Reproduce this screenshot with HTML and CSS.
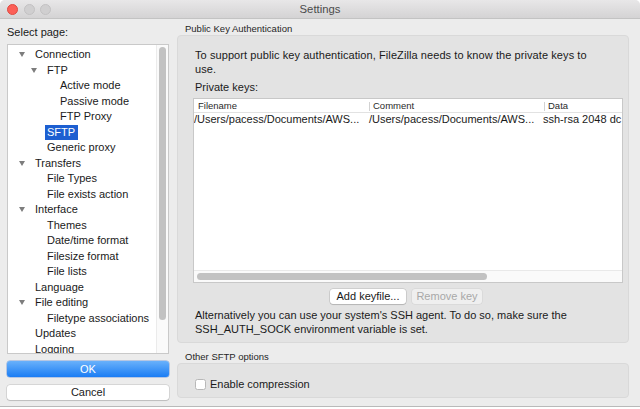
FILE: index.html
```html
<!DOCTYPE html>
<html>
<head>
<meta charset="utf-8">
<link rel="stylesheet" href="styles.css">
</head>
<body>
<div class="window">
  <div class="titlebar">
    <div class="lights">
      <span class="light red"></span>
      <span class="light gray"></span>
      <span class="light gray"></span>
    </div>
    <div class="title">Settings</div>
    <div></div>
  </div>
  <div class="content">
    <div class="left">
      <div class="select-label">Select page:</div>
      <div class="tree">
        <div class="tree-list">
          <div class="item l0"><span class="tw"><span class="tri"></span></span>Connection</div>
          <div class="item l1"><span class="tw"><span class="tri"></span></span>FTP</div>
          <div class="item l2"><span class="tw"></span>Active mode</div>
          <div class="item l2"><span class="tw"></span>Passive mode</div>
          <div class="item l2"><span class="tw"></span>FTP Proxy</div>
          <div class="item l1"><span class="tw"></span><span class="sel">SFTP</span></div>
          <div class="item l1"><span class="tw"></span>Generic proxy</div>
          <div class="item l0"><span class="tw"><span class="tri"></span></span>Transfers</div>
          <div class="item l1"><span class="tw"></span>File Types</div>
          <div class="item l1"><span class="tw"></span>File exists action</div>
          <div class="item l0"><span class="tw"><span class="tri"></span></span>Interface</div>
          <div class="item l1"><span class="tw"></span>Themes</div>
          <div class="item l1"><span class="tw"></span>Date/time format</div>
          <div class="item l1"><span class="tw"></span>Filesize format</div>
          <div class="item l1"><span class="tw"></span>File lists</div>
          <div class="item l0"><span class="tw"></span>Language</div>
          <div class="item l0"><span class="tw"><span class="tri"></span></span>File editing</div>
          <div class="item l1"><span class="tw"></span>Filetype associations</div>
          <div class="item l0"><span class="tw"></span>Updates</div>
          <div class="item l0"><span class="tw"></span>Logging</div>
        </div>
        <div class="vscroll"><div class="vthumb"></div></div>
      </div>
      <div class="btn ok">OK</div>
      <div class="btn cancel">Cancel</div>
    </div>
    <div class="right">
      <div class="group-label">Public Key Authentication</div>
      <div class="group box1">
        <p class="text intro">To support public key authentication, FileZilla needs to know the private keys to use.</p>
        <p class="text keys-label">Private keys:</p>
        <div class="table">
          <div class="thead">
            <div class="th c1">Filename</div>
            <div class="th c2">Comment</div>
            <div class="th c3">Data</div>
          </div>
          <div class="tbody">
            <div class="tr">
              <div class="td c1">/Users/pacess/Documents/AWS...</div>
              <div class="td c2">/Users/pacess/Documents/AWS...</div>
              <div class="td c3">ssh-rsa 2048 dc</div>
            </div>
          </div>
          <div class="hscroll"><div class="hthumb"></div></div>
        </div>
        <div class="btn-row">
          <div class="btn add">Add keyfile...</div>
          <div class="btn remove">Remove key</div>
        </div>
        <p class="text alt">Alternatively you can use your system's SSH agent. To do so, make sure the SSH_AUTH_SOCK environment variable is set.</p>
      </div>
      <div class="group-label second">Other SFTP options</div>
      <div class="group box2">
        <div class="check-row">
          <span class="checkbox"></span>
          <span class="check-text">Enable compression</span>
        </div>
      </div>
    </div>
  </div>
</div>
</body>
</html>
```
FILE: styles.css
```css
* { box-sizing: border-box; }
html, body { margin: 0; padding: 0; }
body {
  width: 640px;
  height: 409px;
  background: #ffffff;
  font-family: "Liberation Sans", Arial, sans-serif;
  font-size: 11px;
  color: #1a1a1a;
  overflow: hidden;
}
.window {
  width: 640px;
  height: 407px;
  background: #ececec;
  border-radius: 5px 5px 0 0;
  border-bottom: 1px solid #b9b9b9;
  overflow: hidden;
}
.titlebar {
  height: 19px;
  background: linear-gradient(#e8e7e8, #d4d3d4);
  border-bottom: 1px solid #c3c3c3;
  display: grid;
  grid-template-columns: 1fr auto 1fr;
  align-items: center;
}
.lights {
  display: flex;
  gap: 5.5px;
  padding-left: 7px;
  padding-top: 1px;
}
.light {
  width: 11px;
  height: 11px;
  border-radius: 50%;
  display: block;
}
.light.red { background: #fc5f57; border: 0.5px solid #de4a41; }
.light.gray { background: #d0cfd0; border: 0.5px solid #c2c1c2; }
.title {
  font-size: 11.3px;
  line-height: 18px;
  color: #4b4b4b;
}
.content {
  display: flex;
  height: 387px;
}
.left {
  width: 162px;
  margin-left: 7px;
  padding-top: 6px;
  display: flex;
  flex-direction: column;
}
.select-label {
  line-height: 15px;
  height: 15px;
}
.tree {
  margin-top: 4px;
  height: 310px;
  background: #ffffff;
  border: 1px solid #c9c9c9;
  display: flex;
}
.tree-list {
  flex: 1;
  overflow: hidden;
  padding-top: 2px;
}
.item {
  height: 15.5px;
  line-height: 15.5px;
  white-space: nowrap;
  color: #1a1a1a;
}
.item.l0 { padding-left: 11px; }
.item.l1 { padding-left: 23px; }
.item.l2 { padding-left: 36px; }
.tw {
  display: inline-block;
  width: 16px;
  height: 10px;
  vertical-align: middle;
}
.tri {
  display: block;
  width: 0;
  height: 0;
  margin-top: 2px;
  border-left: 3px solid transparent;
  border-right: 3px solid transparent;
  border-top: 5px solid #7d7d7d;
}
.sel {
  display: inline-block;
  background: #1d5fd1;
  color: #ffffff;
  padding: 0 3px 0 2px;
  margin-left: -2px;
  line-height: 15.5px;
}
.vscroll {
  width: 12px;
  background: #fafafa;
  border-left: 1px solid #ebebeb;
  padding: 2px 0 0 2px;
}
.vthumb {
  width: 7px;
  height: 273px;
  background: #c2c2c2;
  border-radius: 4px;
}
.btn {
  height: 16px;
  line-height: 16px;
  text-align: center;
  border-radius: 3px;
  font-size: 11px;
}
.btn.ok {
  margin-top: 7px;
  color: #ffffff;
  background: linear-gradient(#69b1fb, #1b7df4);
  box-shadow: 0 0 0 0.5px rgba(20, 90, 200, 0.5);
}
.btn.cancel {
  margin-top: 8px;
  height: 15px;
  line-height: 15px;
  background: #ffffff;
  color: #1a1a1a;
  box-shadow: 0 0 0 0.5px rgba(0, 0, 0, 0.18), 0 1px 1px rgba(0, 0, 0, 0.12);
}
.right {
  width: 452px;
  margin-left: 8px;
  padding-top: 4px;
}
.group-label {
  font-size: 9.5px;
  line-height: 12px;
  height: 12px;
  padding-left: 8px;
  color: #262626;
}
.group-label.second {
  margin-top: 8px;
}
.group {
  background: #e3e3e3;
  border: 1px solid #d9d9d9;
  border-radius: 4px;
}
.box1 {
  padding: 13px 5px 6px 15px;
}
.text {
  margin: 0;
  padding-left: 2px;
  line-height: 13.5px;
}
.intro {
  max-width: 400px;
  letter-spacing: 0.08px;
}
.keys-label {
  margin-top: 4px;
  line-height: 14px;
}
.table {
  margin-top: 4px;
  height: 185px;
  border: 1px solid #c8c8c8;
  background: #ffffff;
  display: flex;
  flex-direction: column;
  overflow: hidden;
}
.thead {
  height: 14px;
  display: flex;
  border-bottom: 1px solid #e2e2e2;
  font-size: 9.5px;
  color: #2a2a2a;
}
.th {
  line-height: 13px;
  padding-left: 4px;
  white-space: nowrap;
}
.th.c2, .th.c3 {
  border-left: 1px solid transparent;
  background: linear-gradient(#d2d2d2, #d2d2d2) no-repeat 0 3px / 1px 9px;
}
.c1 { width: 174px; flex: none; }
.c2 { width: 175px; flex: none; }
.c3 { flex: 1; }
.tbody {
  flex: 1;
}
.tr {
  display: flex;
  height: 14px;
}
.td {
  line-height: 13px;
  white-space: nowrap;
  overflow: hidden;
  padding-left: 0;
}
.td.c2 { padding-left: 1px; }
.td.c3 { padding-left: 0; }
.hscroll {
  height: 12px;
  border-top: 1px solid #e9e9e9;
  background: #fafafa;
  padding: 2px 0 0 3px;
}
.hthumb {
  width: 290px;
  height: 7px;
  background: #c2c2c2;
  border-radius: 4px;
}
.btn-row {
  margin-top: 6px;
  display: flex;
  justify-content: center;
  gap: 6px;
  padding-right: 4px;
}
.btn.add {
  width: 76px;
  height: 15px;
  line-height: 15px;
  background: #ffffff;
  box-shadow: 0 0 0 0.5px rgba(0, 0, 0, 0.18), 0 1px 1px rgba(0, 0, 0, 0.12);
}
.btn.remove {
  width: 70px;
  height: 15px;
  line-height: 15px;
  background: #efefef;
  color: #a8a8a8;
  box-shadow: 0 0 0 0.5px rgba(0, 0, 0, 0.08);
}
.alt {
  margin-top: 5px;
}
.box2 {
  height: 35px;
  padding: 14px 0 0 17px;
}
.check-row {
  display: flex;
  align-items: center;
  height: 12px;
  gap: 4px;
}
.checkbox {
  width: 11px;
  height: 11px;
  background: #ffffff;
  border: 1px solid #b8b8b8;
  border-radius: 2.5px;
  flex: none;
}
.check-text {
  line-height: 12px;
}
```
